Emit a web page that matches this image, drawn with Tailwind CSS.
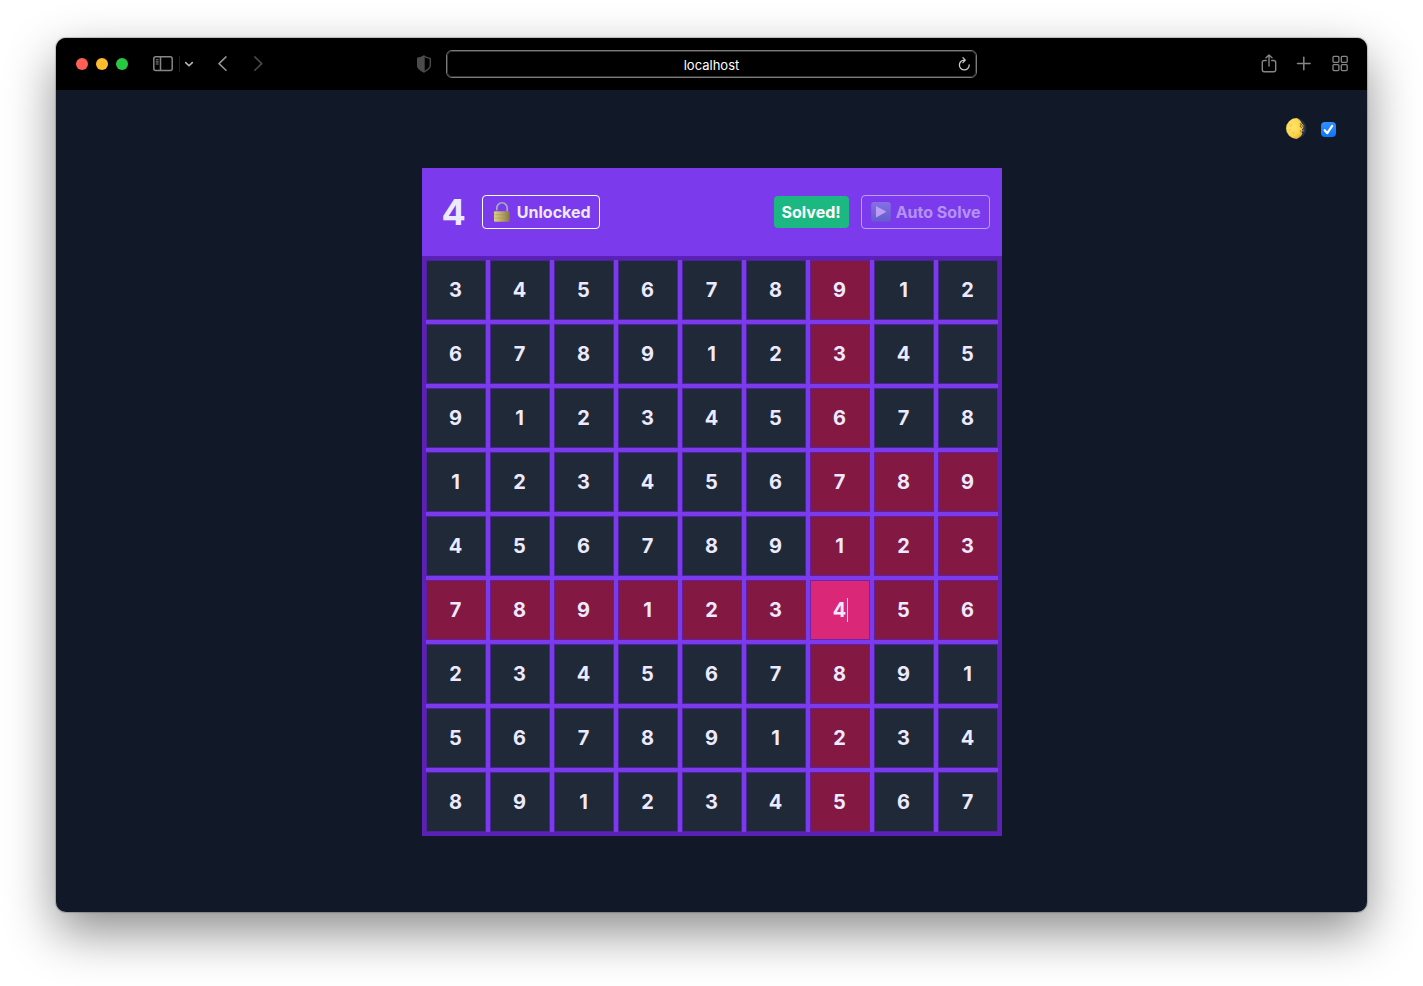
<!DOCTYPE html>
<html lang="en">
<head>
<meta charset="utf-8">
<title>Sudoku</title>
<meta name="viewport" content="width=device-width, initial-scale=1">
<script src="https://cdn.jsdelivr.net/npm/@tailwindcss/browser@4"></script>
</head>
<body class="flex min-h-screen flex-col bg-white px-14 pt-[38px] pb-[74px] font-['Inter',sans-serif]">
<div class="flex flex-1 flex-col overflow-hidden rounded-[10px] bg-[#111827] shadow-[0_0_1px_1px_rgba(0,0,0,0.2),0_20px_50px_rgba(0,0,0,0.45)]">
  <header class="flex h-13 items-center justify-between bg-black px-5 text-[#868686]">
    <div class="flex flex-1 items-center">
      <div class="flex gap-2">
        <span class="size-3 rounded-full bg-[#ff5f57]"></span>
        <span class="size-3 rounded-full bg-[#febc2e]"></span>
        <span class="size-3 rounded-full bg-[#28c840]"></span>
      </div>
      <button type="button" aria-label="Show sidebar" class="ml-[25px]">
        <svg class="block h-4 w-5" viewBox="0 0 20 16" fill="none" stroke="currentColor" stroke-width="1.5"><rect x=".8" y=".8" width="18.400" height="13.800" rx="2"/><path d="M7.500 1v13.500"/><path d="M2.800 3.800h2.800M2.800 5.900h2.800M2.800 8h2.800" stroke-width="1.100"/></svg>
      </button>
      <span class="ml-1.5 h-4 w-px bg-[#202020]"></span>
      <button type="button" aria-label="Tab groups" class="ml-[3px] text-[#b5b5b5]">
        <svg class="block size-3" viewBox="0 0 12 12" fill="none" stroke="currentColor" stroke-width="1.600" stroke-linecap="round" stroke-linejoin="round"><path d="M2.700 4.600 6 7.800l3.300-3.200"/></svg>
      </button>
      <button type="button" aria-label="Back" class="ml-5 text-[#969696]">
        <svg class="block size-4" viewBox="0 0 16 16" fill="none" stroke="currentColor" stroke-width="1.500" stroke-linecap="round" stroke-linejoin="round"><path d="M11 .9 4 7.600l7 6.700"/></svg>
      </button>
      <button type="button" aria-label="Forward" class="ml-5 text-[#4a4a4a]">
        <svg class="block size-4" viewBox="0 0 16 16" fill="none" stroke="currentColor" stroke-width="1.500" stroke-linecap="round" stroke-linejoin="round"><path d="m3.800.9 7 6.700-7 6.700"/></svg>
      </button>
      <button type="button" aria-label="Privacy report" class="mr-3.5 ml-auto text-[#4b4b4b]">
        <svg class="block h-[18px] w-4" viewBox="0 0 16 18" fill="none" stroke="currentColor" stroke-width="1.400" stroke-linejoin="round"><path d="M8 1.200c2 1.300 4 2 6.300 2.200v7.100c0 2.700-2.800 4.600-6.300 6.400-3.500-1.800-6.300-3.700-6.300-6.400V3.400C4 3.200 6 2.500 8 1.200z"/><path d="M8 1.200v15.700c-3.500-1.800-6.300-3.700-6.300-6.400V3.400C4 3.200 6 2.500 8 1.200z" fill="currentColor"/></svg>
      </button>
    </div>
    <div class="relative w-[531px]">
      <input type="text" aria-label="Address" value="localhost" class="block h-7 w-full rounded-md border border-[#7b7b7b] bg-black pt-0.5 text-center text-[13px] text-white outline outline-[#333333] -outline-offset-2">
      <button type="button" aria-label="Reload" class="absolute top-1.5 right-1 text-[#c8c8c8]">
        <svg class="block size-4" viewBox="0 0 16 16" fill="none" stroke="currentColor" stroke-width="1.300" stroke-linecap="round" stroke-linejoin="round"><path d="M7.300 4.100A4.900 4.900 0 1 0 12.200 9M5.900 1.600 8.300 4.100 5.900 6.600"/></svg>
      </button>
    </div>
    <div class="flex flex-1 items-center justify-end gap-4">
      <button type="button" aria-label="Share">
        <svg class="block size-5" viewBox="0 0 20 20" fill="none" stroke="currentColor" stroke-width="1.400" stroke-linecap="round" stroke-linejoin="round"><path d="M7.300 6.500H5.200C4 6.500 3.300 7.200 3.300 8.400v7.400c0 1.200.7 1.900 1.900 1.900h9.600c1.200 0 1.900-.7 1.900-1.900V8.400c0-1.200-.7-1.900-1.900-1.900h-2.100M10 12V.9M7 3.700 10 .9l3 2.800"/></svg>
      </button>
      <button type="button" aria-label="New tab">
        <svg class="block size-4" viewBox="0 0 16 16" fill="none" stroke="currentColor" stroke-width="1.500" stroke-linecap="round"><path d="M8.800 1.200v12.600M2.500 7.500h12.600"/></svg>
      </button>
      <button type="button" aria-label="Tab overview" class="ml-1">
        <svg class="block size-4 overflow-visible" viewBox="0 0 16 16" fill="none" stroke="currentColor" stroke-width="1.300"><rect x="2" y=".4" width="5.900" height="5.900" rx="1"/><rect x="10.300" y=".4" width="5.900" height="5.900" rx="1"/><rect x="2" y="8.700" width="5.900" height="5.900" rx="1"/><rect x="10.300" y="8.700" width="5.900" height="5.900" rx="1"/></svg>
      </button>
    </div>
  </header>

  <main class="flex flex-1 flex-col px-[31px] pt-7">
    <div class="flex h-[22px] items-center justify-end gap-3.5">
      <label for="dark" aria-label="Dark mode">
        <svg class="block size-[22px]" viewBox="0 0 22 22">
          <defs>
            <radialGradient id="moon" cx=".35" cy=".4" r=".75"><stop offset="0" stop-color="#ffe66b"/><stop offset=".6" stop-color="#fdd54b"/><stop offset="1" stop-color="#d9a033"/></radialGradient>
          </defs>
          <circle cx="11" cy="10.500" r="10.400" fill="#263446"/>
          <path d="M11.500.1a10.400 10.400 0 1 0 0 20.800c2.700-.8 5-3 5.900-5.400l-.9-1.500 1.500-1.200-1.200-1.500 1.900-1.400-1.500-1.800 1-1.500-1.500-1C16.400 4 14.500 1 11.500.1z" fill="url(#moon)"/>
          <path d="m14.800 5.500 1.700 1.200-1.300 1.800 1.700 1.300M18.300 7l.6 1.800M19 11.500l-1 2M15.200 12.500l1 1.200" stroke="#8c7038" stroke-width="1.100" fill="none"/>
          <circle cx="6" cy="7.500" r="1.500" fill="#e9bd43" opacity=".5"/><circle cx="8.500" cy="15" r="1.300" fill="#e9bd43" opacity=".5"/><circle cx="4.800" cy="12.500" r="1" fill="#e9bd43" opacity=".5"/>
        </svg>
      </label>
      <span class="grid">
        <input id="dark" type="checkbox" checked class="peer col-start-1 row-start-1 size-[15px] appearance-none rounded-[4px] bg-white checked:bg-linear-to-b checked:from-[#2f90ff] checked:to-[#0a75f8]">
        <svg class="pointer-events-none col-start-1 row-start-1 hidden size-[15px] peer-checked:block" viewBox="0 0 15 15" fill="none" stroke="#ffffff" stroke-width="2.200" stroke-linecap="round" stroke-linejoin="round"><path d="m3.700 8.200 2.600 3 4.900-7.400"/></svg>
      </span>
    </div>

    <section class="mx-auto mt-7 w-[580px] max-w-full" aria-label="Sudoku board">
      <div class="flex h-22 items-center bg-[#7c3aed] pr-3 pl-5 font-bold text-[#ede9fe]">
        <h1 class="text-4xl font-bold">4</h1>
        <button type="button" class="ml-4 flex h-[34px] items-center gap-1 rounded-[4px] border border-white px-2 text-base">
          <svg class="block size-[22px]" viewBox="0 0 22 22">
            <defs><linearGradient id="brass"><stop offset="0" stop-color="#ddd182"/><stop offset=".5" stop-color="#b7a767"/><stop offset="1" stop-color="#85784a"/></linearGradient></defs>
            <path d="M5.800 9.300V7a5.200 5.200 0 0 1 10.400 0v3.500" fill="none" stroke="#9fb2bd" stroke-width="1.600"/>
            <rect x="3" y="10.300" width="15.600" height="10.400" rx="1" fill="url(#brass)"/>
            <path d="M3.200 13.700h15.200M3.200 17.100h15.200" stroke="#9a8d55" stroke-width=".4"/>
          </svg>
          Unlocked
        </button>
        <span class="ml-auto flex h-8 items-center rounded-[4px] bg-[#1bb981] px-2 text-base text-white">Solved!</span>
        <button type="button" disabled class="ml-3 flex h-[34px] items-center gap-1 rounded-[4px] border border-white px-2 text-base opacity-50">
          <svg class="block size-[22px]" viewBox="0 0 22 22">
            <defs><linearGradient id="key" x2="0" y2="1"><stop offset="0" stop-color="#8ea9dc"/><stop offset="1" stop-color="#4c7eb2"/></linearGradient></defs>
            <rect x="1.200" y="1" width="19.600" height="19.800" rx="3" fill="url(#key)"/>
            <path d="M6 5v11.600L16.500 10.800z" fill="#ffffff"/>
          </svg>
          Auto Solve
        </button>
      </div>
      <div id="grid" class="grid grid-cols-9 gap-1 border-4 border-[#5b21b6] bg-[#7c3aed]"></div>
    </section>
  </main>
</div>

<script>
const rows = ["345678912", "678912345", "912345678", "123456789", "456789123", "789123456", "234567891", "567891234", "891234567"];
const sel = { r: 5, c: 6 };
const grid = document.getElementById("grid");
const base = "block aspect-square w-full border border-[#5b21b6]/80 text-center text-xl font-bold text-[#ede9fe] outline-none ";
rows.forEach((row, r) => [...row].forEach((n, c) => {
  const wrap = document.createElement("div");
  wrap.className = "relative";
  const cell = document.createElement("input");
  const active = r === sel.r && c === sel.c;
  const related = r === sel.r || c === sel.c || (r >= 3 && r <= 5 && c >= 6);
  cell.type = "text";
  cell.inputMode = "numeric";
  cell.maxLength = 1;
  cell.value = n;
  cell.setAttribute("aria-label", `Row ${r + 1}, column ${c + 1}`);
  cell.className = base + (active ? "bg-[#db2777]" : related ? "bg-[#831843]" : "bg-[#1f2937]");
  wrap.append(cell);
  if (active) {
    const caret = document.createElement("span");
    caret.className = "absolute top-[18px] left-[37px] h-6 w-px bg-[#f3d6ea]";
    wrap.append(caret);
  }
  grid.append(wrap);
}));
</script>
</body>
</html>
